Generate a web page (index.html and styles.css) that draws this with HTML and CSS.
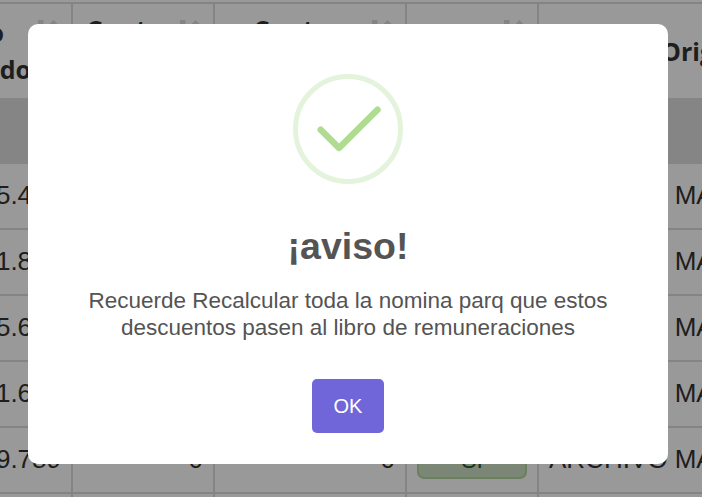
FILE: index.html
```html
<!DOCTYPE html>
<html lang="es">
  <head>
    <meta charset="UTF-8" />
    <meta name="viewport" content="width=device-width, initial-scale=1.0" />
    <title>Descuentos</title>
    <link rel="stylesheet" href="styles.css">
  </head>
  <body>
    <svg width="0" height="0" class="defs">
      <symbol id="sort" viewBox="0 0 22 24">
        <path d="M1 0h5.500v14h3l-6 7-6-7h3zM16.500 0l6 6h-3v15h-6V6h-3z" />
      </symbol>
    </svg>

    <div class="table">
      <div class="row head">
        <div class="cell descontado"><span><span class="linea">Monto</span><br />Descontado</span><svg class="sort"><use href="#sort" /></svg></div>
        <div class="cell"><span class="cuota">Cuota</span><svg class="sort"><use href="#sort" /></svg></div>
        <div class="cell cuotas"><span class="cuota">Cuota</span><svg class="sort"><use href="#sort" /></svg></div>
        <div class="cell"><span></span><svg class="sort"><use href="#sort" /></svg></div>
        <div class="cell origen">Origen</div>
      </div>
      <div class="filters"></div>
      <div class="row">
        <div class="cell">5.456</div><div class="cell">0</div><div class="cell">0</div>
        <div class="cell"><span class="badge">SI</span></div><div class="cell texto">ARCHIVO MASIVO</div>
      </div>
      <div class="row">
        <div class="cell">1.890</div><div class="cell">0</div><div class="cell">0</div>
        <div class="cell"><span class="badge">SI</span></div><div class="cell texto">ARCHIVO MASIVO</div>
      </div>
      <div class="row">
        <div class="cell">5.690</div><div class="cell">0</div><div class="cell">0</div>
        <div class="cell"><span class="badge">SI</span></div><div class="cell texto">ARCHIVO MASIVO</div>
      </div>
      <div class="row">
        <div class="cell">1.690</div><div class="cell">0</div><div class="cell">0</div>
        <div class="cell"><span class="badge">SI</span></div><div class="cell texto">ARCHIVO MASIVO</div>
      </div>
      <div class="row">
        <div class="cell">9.789</div><div class="cell">0</div><div class="cell">0</div>
        <div class="cell"><span class="badge">SI</span></div><div class="cell texto">ARCHIVO MASIVO</div>
      </div>
      <div class="row last">
        <div class="cell"></div><div class="cell"></div><div class="cell"></div>
        <div class="cell"></div><div class="cell"></div>
      </div>
    </div>

    <div class="overlay">
      <div class="modal">
        <svg class="icon" viewBox="0 0 110 110">
          <circle cx="55" cy="55" r="52.5" />
          <path d="M27.7 55.8L46 74L84.5 35.8" />
        </svg>
        <h2>¡aviso!</h2>
        <p>Recuerde Recalcular toda la nomina parq que estos descuentos pasen al libro de remuneraciones</p>
        <button class="ok">OK</button>
      </div>
    </div>
  </body>
</html>
```

FILE: styles.css
```css
* {
  box-sizing: border-box;
}

body {
  margin: 0;
  height: 497px;
  overflow: hidden;
  background: #fff;
  font-family: "Liberation Sans", Arial, sans-serif;
}

.defs {
  position: absolute;
}

/* tabla */
.table {
  height: 495px;
  margin-top: 2px;
  border-top: 2px solid #dcdcdc;
  overflow: hidden;
  color: #333;
  font-size: 26px;
}

.row {
  display: grid;
  grid-template-columns: 73px 142px 192px 132px 1fr;
  height: 66px;
}

.row.last {
  height: 3px;
}

.cell {
  display: flex;
  align-items: center;
  justify-content: flex-end;
  min-width: 0;
  padding: 0 10px 2px 10px;
  border-right: 2px solid #dcdcdc;
  border-bottom: 2px solid #dcdcdc;
  white-space: nowrap;
}

.last .cell {
  padding: 0;
  border-bottom: none;
}

.cell:last-child {
  border-right: none;
}

.texto {
  justify-content: flex-start;
}

.head {
  height: 94px;
  font-family: "Open Sans", "Noto Sans", sans-serif;
  font-size: 25px;
  font-weight: 700;
  line-height: 37px;
}

.head .cell {
  align-items: flex-start;
  justify-content: space-between;
  padding: 10px 12px 0 13px;
  border-bottom: none;
}

.head .descontado {
  justify-content: flex-end;
  text-align: right;
}

.linea {
  padding-right: 27px;
}

.descontado .sort {
  margin-left: 6px;
}

.cuota {
  margin-top: -2px;
  font-size: 26px;
}

.head .cuotas {
  padding-left: 38px;
}

.head .origen {
  justify-content: flex-start;
  align-items: center;
  padding: 0 0 0 122px;
}

.sort {
  flex: none;
  width: 22px;
  height: 24px;
  margin-top: 6px;
  overflow: visible;
  fill: #dcdcdc;
}

#sort {
  overflow: visible;
}

.filters {
  height: 66px;
  background: #dedede;
}

.badge {
  width: 110px;
  height: 40px;
  border: 2px solid #b2d69c;
  border-radius: 7px;
  background: linear-gradient(#cfe5c5, #cfdfc6);
  color: #2d582d;
  font-size: 23px;
  line-height: 38px;
  text-align: center;
}

/* aviso */
.overlay {
  position: fixed;
  inset: 0;
  display: flex;
  justify-content: center;
  align-items: flex-start;
  padding-top: 24px;
  background: rgba(0, 0, 0, 0.4);
}

.modal {
  display: flex;
  flex-direction: column;
  align-items: center;
  width: 640px;
  height: 440px;
  margin-right: 6px;
  padding-top: 50px;
  border-radius: 10px;
  background: #fff;
  color: #545454;
  text-align: center;
}

.icon {
  width: 110px;
  height: 110px;
  fill: none;
  stroke: #b0dc92;
  stroke-width: 6.5;
  stroke-linecap: round;
  stroke-linejoin: round;
}

.icon circle {
  stroke: #e4f3db;
  stroke-width: 5;
}

.modal h2 {
  margin: 40px 0 0;
  font-size: 37.5px;
  line-height: 44px;
}

.modal p {
  width: 560px;
  margin: 20px 0 0;
  font-size: 22.5px;
  line-height: 26.5px;
}

.ok {
  width: 72px;
  height: 54px;
  margin-top: 38px;
  padding: 0;
  border: none;
  border-radius: 5px;
  background: #7066d9;
  color: #fff;
  font-family: inherit;
  font-size: 20px;
}
```
